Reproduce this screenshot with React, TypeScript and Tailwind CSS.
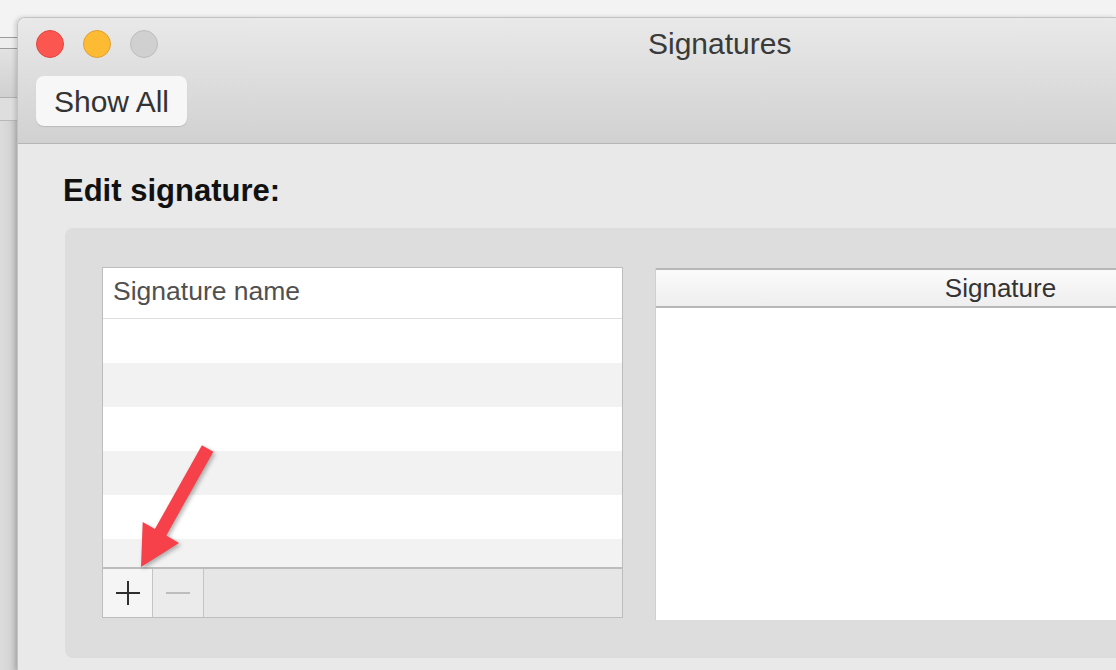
import React from "react";

const rows = [false, true, false, true, false, true];

function TrafficLights() {
  return (
    <div className="flex items-center gap-[19px]">
      <span className="block h-[28px] w-[28px] rounded-full border border-[#e2463f] bg-[#fc5650]" />
      <span className="block h-[28px] w-[28px] rounded-full border border-[#dea236] bg-[#fdbb33]" />
      <span className="block h-[28px] w-[28px] rounded-full border border-[#bdbdbd] bg-[#d0d0d0]" />
    </div>
  );
}

function SignatureList() {
  return (
    <div className="flex h-[351px] w-[521px] shrink-0 flex-col border border-[#bdbdbd] bg-white">
      <div className="flex h-[51px] shrink-0 items-center border-b border-[#dedede] pb-[3px] pl-[10px] text-[26.5px] text-[#505050]">
        Signature name
      </div>
      <div className="flex-1 overflow-hidden">
        {rows.map((striped, i) => (
          <div key={i} className={striped ? "h-[44px] bg-[#f2f2f2]" : "h-[44px] bg-white"} />
        ))}
      </div>
      <div className="flex h-[50px] shrink-0 border-t-2 border-[#bcbcbc] bg-[#e6e6e6]">
        <button className="flex w-[50px] items-center justify-center border-r border-[#c4c4c4] bg-[#f5f5f5]">
          <svg width="28" height="28" viewBox="0 0 28 28">
            <path d="M14 2v24M2 14h24" stroke="#2e2e2e" strokeWidth="2" />
          </svg>
        </button>
        <button className="flex w-[51px] items-center justify-center border-r border-[#c4c4c4] bg-[#ebebeb]">
          <svg width="26" height="26" viewBox="0 0 26 26">
            <path d="M1 13h24" stroke="#bdbdbd" strokeWidth="2" />
          </svg>
        </button>
        <div className="flex-1" />
      </div>
    </div>
  );
}

function SignaturePreview() {
  return (
    <div className="mt-[1px] flex h-[352px] w-[690px] shrink-0 flex-col border-l border-[#cfcfcf] bg-white">
      <div className="flex h-[40px] shrink-0 items-center justify-center border-y-2 border-[#b7b7b7] bg-gradient-to-b from-[#fbfbfb] to-[#eeeeee] text-[26px] text-[#333]">
        Signature
      </div>
      <div className="flex-1" />
    </div>
  );
}

export default function App() {
  return (
    <div
      className="relative flex h-[670px] w-[1116px] overflow-hidden bg-[#f3f3f3]"
      style={{ fontFamily: '"Liberation Sans", Arial, sans-serif' }}
    >
      {/* window peeking out from behind */}
      <div className="flex w-[17px] shrink-0 flex-col bg-gradient-to-r from-[#dcdcdc] via-[#d6d6d6] to-[#c4c4c4]">
        <div className="h-[37px] bg-[#f3f3f3]" />
        <div className="h-[1px] bg-[#9c9c9c]" />
        <div className="h-[10px] bg-[#ededed]" />
        <div className="h-[1px] bg-[#9c9c9c]" />
        <div className="h-[48px] bg-gradient-to-b from-[#e2e2e2] to-[#d0d0d0]" />
        <div className="h-[1px] bg-[#b0b0b0]" />
        <div className="h-[22px] bg-[#dedede]" />
        <div className="h-[1px] bg-[#b8b8b8]" />
        <div className="flex-1" />
      </div>

      <div className="mt-[17px] flex flex-1 flex-col overflow-hidden rounded-tl-[8px] border-l border-t border-[#c2c2c2] shadow-[-2px_0_4px_rgba(0,0,0,0.15)]">
        {/* title bar + toolbar */}
        <div className="flex h-[126px] shrink-0 flex-col border-b border-[#b6b6b6] bg-gradient-to-b from-[#e9e9e9] to-[#d1d1d1] pl-[18px] pt-[11px]">
          <div className="flex items-center">
            <TrafficLights />
            <div className="ml-[490px] text-[30px] leading-[30px] text-[#3a3a3a]">Signatures</div>
          </div>
          <button className="mt-[17px] flex h-[50px] w-[151px] items-center justify-center rounded-[8px] bg-[#f7f7f7] text-[30px] text-[#333] shadow-[0_1px_1px_rgba(0,0,0,0.12)]">
            Show All
          </button>
        </div>

        {/* pane */}
        <div className="flex flex-1 flex-col bg-[#e9e9e9] pl-[45px] pt-[29px]">
          <h1 className="text-[31px] font-bold leading-[36px] text-[#111]">Edit signature:</h1>
          <div className="ml-[2px] mt-[19px] flex h-[430px] w-[1200px] gap-[32px] rounded-[8px] bg-[#dddddd] pl-[37px] pt-[39px]">
            <SignatureList />
            <SignaturePreview />
          </div>
        </div>
      </div>

      {/* callout arrow */}
      <svg
        className="pointer-events-none absolute left-0 top-0"
        width="1116"
        height="670"
        viewBox="0 0 1116 670"
        style={{ filter: "drop-shadow(2px 2px 2px rgba(0,0,0,0.3))" }}
      >
        <polygon
          points="141,567 179,543 166.3,535.4 213.3,451.7 201.9,445.3 154.9,529 142.7,521.9"
          fill="#f6404a"
        />
      </svg>
    </div>
  );
}
